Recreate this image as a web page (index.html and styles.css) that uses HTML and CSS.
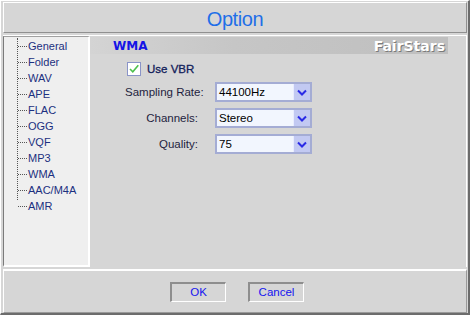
FILE: index.html
```html
<!DOCTYPE html>
<html>
<head>
<meta charset="utf-8">
<link rel="stylesheet" href="styles.css">
</head>
<body>
<div class="window">
  <div class="title">Option</div>
  <div class="main">
    <div class="tree">
      <ul class="tree-list">
        <li>General</li>
        <li>Folder</li>
        <li>WAV</li>
        <li>APE</li>
        <li>FLAC</li>
        <li>OGG</li>
        <li>VQF</li>
        <li>MP3</li>
        <li>WMA</li>
        <li>AAC/M4A</li>
        <li class="last">AMR</li>
      </ul>
    </div>
    <div class="content">
      <div class="header">
        <span class="h-title">WMA</span>
        <span class="brand">FairStars</span>
      </div>
      <div class="form">
        <label class="check-row">
          <span class="checkbox"><svg width="12" height="12" viewBox="0 0 12 12"><path d="M2 6 L4.8 8.8 L10.3 2.3" fill="none" stroke="#4cc04c" stroke-width="1.6"/></svg></span>
          <span class="check-label">Use VBR</span>
        </label>
        <div class="row">
          <span class="lbl">Sampling Rate:</span>
          <div class="select"><span class="val">44100Hz</span><span class="btn"><svg width="10" height="7" viewBox="0 0 10 7"><path d="M1 1.5 L5 5.5 L9 1.5" fill="none" stroke="#2a2ae6" stroke-width="2"/></svg></span></div>
        </div>
        <div class="row">
          <span class="lbl">Channels:</span>
          <div class="select"><span class="val">Stereo</span><span class="btn"><svg width="10" height="7" viewBox="0 0 10 7"><path d="M1 1.5 L5 5.5 L9 1.5" fill="none" stroke="#2a2ae6" stroke-width="2"/></svg></span></div>
        </div>
        <div class="row">
          <span class="lbl">Quality:</span>
          <div class="select"><span class="val">75</span><span class="btn"><svg width="10" height="7" viewBox="0 0 10 7"><path d="M1 1.5 L5 5.5 L9 1.5" fill="none" stroke="#2a2ae6" stroke-width="2"/></svg></span></div>
        </div>
      </div>
    </div>
  </div>
  <div class="footer">
    <button class="bt">OK</button>
    <button class="bt">Cancel</button>
  </div>
</div>
</body>
</html>
```

FILE: styles.css
```css
html, body {
  margin: 0;
  padding: 0;
  background: #d6d6d6;
}
body {
  width: 470px;
  height: 315px;
  overflow: hidden;
  font-family: "Liberation Sans", Arial, sans-serif;
}
.window {
  box-sizing: border-box;
  width: 470px;
  height: 315px;
  border-top: 1px solid #ffffff;
  border-left: 1px solid #ffffff;
  border-right: 2px solid #6c6c6c;
  border-bottom: 2px solid #6c6c6c;
  padding: 1px 1px 0 2px;
  display: flex;
  flex-direction: column;
  background: #d6d6d6;
}
.title {
  box-sizing: border-box;
  height: 31px;
  border-top: 1px solid #ffffff;
  border-left: 1px solid #ffffff;
  border-right: 1px solid #909090;
  border-bottom: 1px solid #909090;
  text-align: center;
  color: #1f6fe8;
  font-family: "Liberation Sans", Arial, sans-serif;
  font-size: 20px;
  letter-spacing: -0.4px;
  line-height: 32px;
}
.main {
  display: flex;
  height: 233px;
  margin-top: 2px;
  border-top: 1px solid #ffffff;
}
.tree {
  box-sizing: border-box;
  width: 87px;
  background: #efefef;
  border-left: 1px solid #7a7a7a;
  border-top: 1px solid #a0a0a0;
  border-right: 2px solid #ffffff;
  border-bottom: 2px solid #ffffff;
  padding-top: 1px;
}
.tree-list {
  list-style: none;
  margin: 0 0 0 13px;
  padding: 0;
  border-left: 1px dotted #555;
  height: 162px;
  font-family: "Liberation Sans", Arial, sans-serif;
  font-size: 11px;
  color: #1c2f80;
}
.tree-list li {
  height: 16px;
  line-height: 16px;
  position: relative;
  padding-left: 10px;
}
.tree-list li::before {
  content: "";
  position: absolute;
  left: 0;
  top: 8px;
  width: 9px;
  border-top: 1px dotted #555;
}
.tree-list li.last::after {
  content: "";
  position: absolute;
  left: -1px;
  top: 9px;
  width: 2px;
  height: 8px;
  background: #efefef;
}
.content {
  flex: 1;
  padding: 1px 18px 0 0;
  border-right: 1px solid #ffffff;
}
.header {
  height: 17px;
  background: linear-gradient(to right, #d4d4d4 0%, #c6c6c6 40%, #bfbfbf 100%);
  display: flex;
  align-items: center;
  justify-content: space-between;
  padding: 0 3px 0 23px;
}
.h-title {
  color: #1414e6;
  font-weight: bold;
  font-size: 12px;
  font-family: "DejaVu Sans", Verdana, sans-serif;
}
.brand {
  color: #ffffff;
  font-weight: bold;
  font-size: 14px;
  font-family: "DejaVu Sans", Verdana, sans-serif;
  text-shadow: 1px 1px 0 #7a7a7a;
}
.form {
  padding: 7px 0 0 35px;
  display: flex;
  flex-direction: column;
}
.check-row {
  display: flex;
  align-items: center;
  gap: 6px;
  height: 15px;
  margin-left: 2px;
}
.checkbox {
  box-sizing: border-box;
  width: 14px;
  height: 14px;
  border: 1px solid #8a94c8;
  background: #ffffff;
  display: flex;
}
.check-label {
  font-size: 11.5px;
  color: #12205a;
  font-family: "Liberation Sans", Arial, sans-serif;
  -webkit-text-stroke: 0.3px #12205a;
}
.row {
  display: flex;
  align-items: center;
  height: 20px;
  margin-top: 6px;
}
.row:first-of-type { margin-top: 6px; }
.lbl {
  width: 73px;
  white-space: nowrap;
  text-align: right;
  font-size: 11.5px;
  color: #1e1e40;
  font-family: "Liberation Sans", Arial, sans-serif;
  margin-right: 17px;
}
.select {
  box-sizing: border-box;
  width: 97px;
  height: 20px;
  border: 2px solid #a4acd4;
  background: #f2f6fe;
  display: flex;
  align-items: center;
}
.val {
  flex: 1;
  padding-left: 2px;
  font-size: 11.5px;
  color: #000;
  font-family: "Liberation Sans", Arial, sans-serif;
}
.btn {
  width: 16px;
  height: 16px;
  background: #c2c9f2;
  border-left: 1px solid #e8ecff;
  display: flex;
  align-items: center;
  justify-content: center;
}
.footer {
  box-sizing: border-box;
  height: 44px;
  margin-top: 2px;
  border-top: 2px solid #ffffff;
  border-left: 1px solid #ffffff;
  border-right: 1px solid #9a9a9a;
  border-bottom: 1px solid #9a9a9a;
  display: flex;
  justify-content: center;
  align-items: center;
  gap: 22px;
  padding-left: 4px;
}
.bt {
  box-sizing: border-box;
  width: 56px;
  height: 20px;
  background: #d6d6d6;
  border-top: 2px solid #8e8e8e;
  border-left: 2px solid #8e8e8e;
  border-right: 1px solid #ffffff;
  border-bottom: 1px solid #ffffff;
  color: #1414f0;
  font-family: "Liberation Sans", Arial, sans-serif;
  font-size: 11.5px;
  padding: 0;
}
```
